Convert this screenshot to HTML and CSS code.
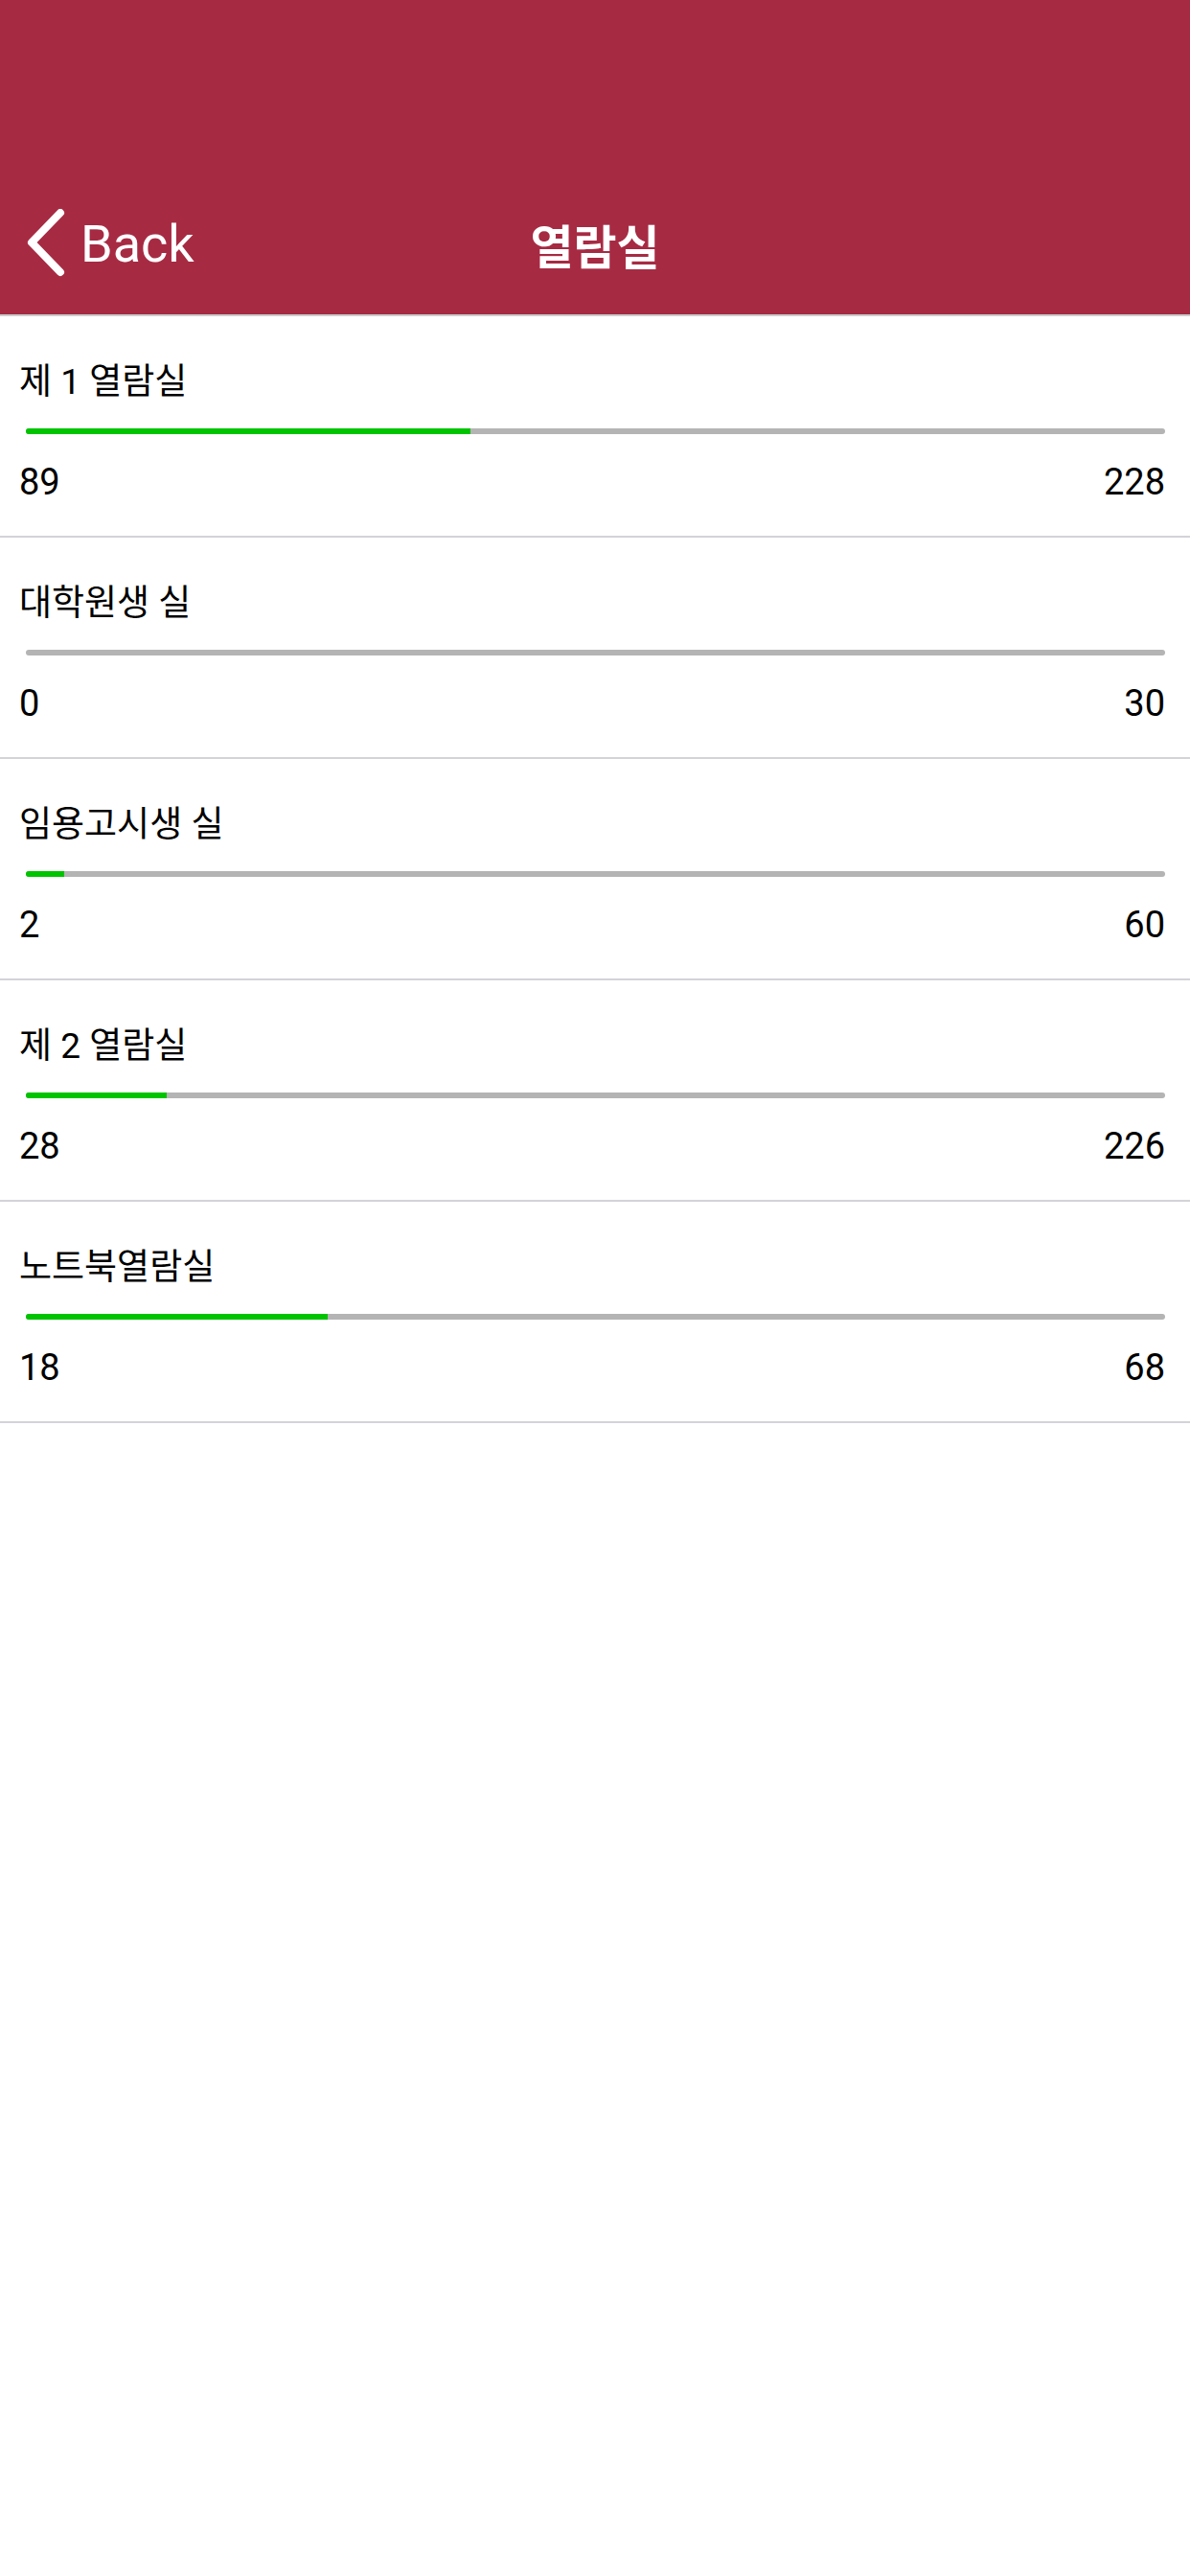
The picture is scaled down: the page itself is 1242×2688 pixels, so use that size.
FILE: index.html
```html
<!DOCTYPE html>
<html lang="ko">
<head>
    <meta charset="UTF-8">
    <meta name="viewport" content="width=device-width, initial-scale=1.0">
    <title>열람실</title>
    <link rel="stylesheet" href="styles.css">
</head>
<body>
    <header class="top-bar">
        <nav class="nav-row">
            <a href="#" class="back-link">
                <svg class="back-icon" width="44" height="72" viewBox="0 0 44 72">
                    <path d="M36 4 L6 35 L36 66" fill="none" stroke="#fff" stroke-width="8" stroke-linecap="round" stroke-linejoin="round"/>
                </svg>
                <span>Back</span>
            </a>
            <h1 class="nav-title">열람실</h1>
            <div></div>
        </nav>
    </header>

    <main class="room-list">
        <div class="room">
            <div class="room-name">제 1 열람실</div>
            <div class="seat-bar"><div class="seat-fill" style="width: 39.04%"></div></div>
            <div class="seat-count"><span>89</span><span>228</span></div>
        </div>
        <div class="room">
            <div class="room-name">대학원생 실</div>
            <div class="seat-bar"><div class="seat-fill" style="width: 0%"></div></div>
            <div class="seat-count"><span>0</span><span>30</span></div>
        </div>
        <div class="room">
            <div class="room-name">임용고시생 실</div>
            <div class="seat-bar"><div class="seat-fill" style="width: 3.33%"></div></div>
            <div class="seat-count"><span>2</span><span>60</span></div>
        </div>
        <div class="room">
            <div class="room-name">제 2 열람실</div>
            <div class="seat-bar"><div class="seat-fill" style="width: 12.39%"></div></div>
            <div class="seat-count"><span>28</span><span>226</span></div>
        </div>
        <div class="room">
            <div class="room-name">노트북열람실</div>
            <div class="seat-bar"><div class="seat-fill" style="width: 26.47%"></div></div>
            <div class="seat-count"><span>18</span><span>68</span></div>
        </div>
    </main>
</body>
</html>
```

FILE: styles.css
```css
* {
    margin: 0;
    padding: 0;
    box-sizing: border-box;
}

body {
    font-family: Roboto, "Noto Sans CJK KR", sans-serif;
    background: #ffffff;
    color: #000000;
    width: 1242px;
    min-height: 2688px;
}

.top-bar {
    background: #a72a43;
    height: 330px;
    padding-top: 188px;
    border-bottom: 2px solid #c9cecd;
}

.nav-row {
    display: grid;
    grid-template-columns: 1fr auto 1fr;
    align-items: center;
    height: 132px;
}

.back-link {
    display: flex;
    align-items: center;
    color: #ffffff;
    text-decoration: none;
    font-size: 54px;
    padding-left: 27px;
}

.back-icon {
    display: block;
    margin-right: 13px;
}

.nav-title {
    color: #ffffff;
    font-size: 49px;
    font-weight: 700;
    font-family: "Noto Sans CJK KR", sans-serif;
}

.room {
    height: 231px;
    padding: 47px 26px 0 20px;
    border-bottom: 2px solid #d3d3d8;
}

.room-name {
    font-size: 37px;
    line-height: 44px;
}

.seat-bar {
    height: 6px;
    margin: 26px 0 0 7px;
    background: #b4b4b4;
    border-radius: 3px;
    overflow: hidden;
}

.seat-fill {
    height: 100%;
    background: #00c400;
}

.seat-count {
    display: flex;
    justify-content: space-between;
    font-size: 38px;
    line-height: 44px;
    margin-top: 28px;
}
```
